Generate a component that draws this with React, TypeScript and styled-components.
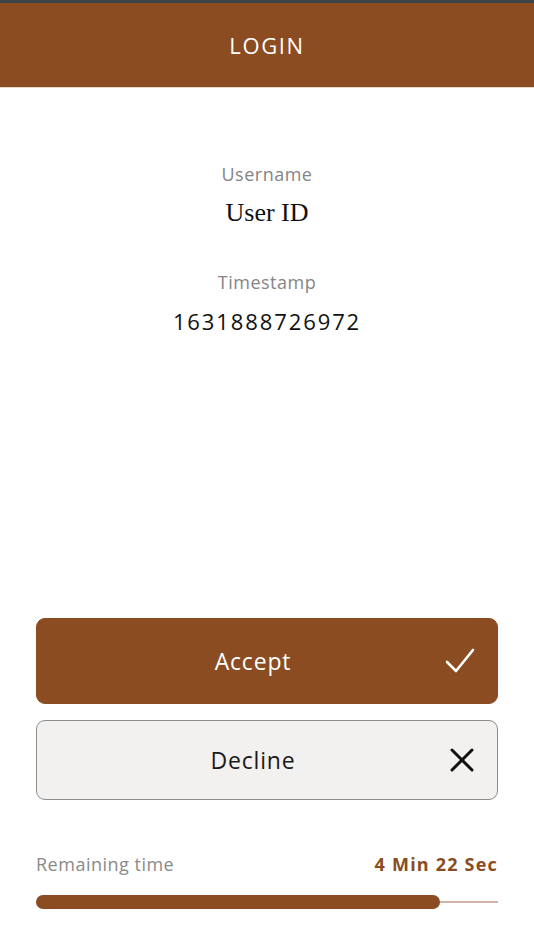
import styled, { createGlobalStyle } from "styled-components";

const Global = createGlobalStyle`
  html, body {
    margin: 0;
    padding: 0;
    background: #fff;
  }
  body {
    font-family: "Open Sans", "Liberation Sans", sans-serif;
  }
`;

const brown = "#8a4c20";

const Page = styled.div`
  width: 534px;
  height: 950px;
  display: flex;
  flex-direction: column;
  border-top: 3px solid #3b4148;
  box-sizing: border-box;
`;

const Header = styled.header`
  height: 84px;
  background: ${brown};
  color: #fff;
  display: flex;
  align-items: center;
  justify-content: center;
  font-size: 22px;
  letter-spacing: 1.6px;
  border-bottom: 1px solid #e8d9cf;
`;

const Info = styled.section`
  display: flex;
  flex-direction: column;
  align-items: center;
  padding-top: 75px;
`;

const Label = styled.div`
  color: #858585;
  font-size: 18px;
  letter-spacing: 0.5px;
  line-height: 22px;
`;

const Value = styled.div<{ $serif?: boolean }>`
  color: #111;
  font-family: ${(p) => (p.$serif ? `"Liberation Serif", serif` : `"Open Sans", sans-serif`)};
  font-size: ${(p) => (p.$serif ? "26px" : "22px")};
  letter-spacing: ${(p) => (p.$serif ? "0" : "1.9px")};
  line-height: 28px;
  margin-top: 14px;
  margin-bottom: 44px;
`;

const Actions = styled.section`
  margin-top: auto;
  padding: 0 36px 41px;
  display: flex;
  flex-direction: column;
`;

const Button = styled.button<{ $primary?: boolean }>`
  position: relative;
  display: flex;
  align-items: center;
  justify-content: center;
  width: 100%;
  height: ${(p) => (p.$primary ? "86px" : "80px")};
  border-radius: 9px;
  border: 1px solid ${(p) => (p.$primary ? brown : "#8d8d8d")};
  background: ${(p) => (p.$primary ? brown : "#f2f1f0")};
  color: ${(p) => (p.$primary ? "#fff" : "#1a1a1a")};
  font-family: "Open Sans", sans-serif;
  font-size: 23px;
  letter-spacing: 0.8px;
  margin-bottom: 16px;
  cursor: pointer;
  padding: 0 28px 0 0;
`;

const Icon = styled.span`
  position: absolute;
  right: 22px;
  top: 50%;
  transform: translateY(-50%);
  display: flex;
`;

const TimeRow = styled.div`
  display: flex;
  justify-content: space-between;
  align-items: baseline;
  margin-top: 36px;
`;

const TimeLabel = styled.span`
  color: #8a8a8a;
  font-size: 18px;
  letter-spacing: 0.5px;
`;

const TimeValue = styled.span`
  color: ${brown};
  font-size: 18px;
  font-weight: 700;
  letter-spacing: 1.2px;
`;

const Track = styled.div`
  margin-top: 19px;
  height: 14px;
  display: flex;
  align-items: center;
  position: relative;
  &::before {
    content: "";
    position: absolute;
    left: 0;
    right: 0;
    top: 6px;
    height: 2px;
    background: #d2b3a8;
  }
`;

const Fill = styled.div`
  position: relative;
  height: 14px;
  border-radius: 7px;
  background: ${brown};
`;

export default function App() {
  const progress = 404 / 462;
  return (
    <>
      <Global />
      <Page>
        <Header>LOGIN</Header>
        <Info>
          <Label>Username</Label>
          <Value $serif>User ID</Value>
          <Label>Timestamp</Label>
          <Value>1631888726972</Value>
        </Info>
        <Actions>
          <Button $primary>
            Accept
            <Icon>
              <svg width="30" height="30" viewBox="0 0 30 30" fill="none">
                <path d="M2 16 L11 25 L28 4" stroke="#fff" strokeWidth="2.6" strokeLinecap="round" strokeLinejoin="round" />
              </svg>
            </Icon>
          </Button>
          <Button>
            Decline
            <Icon>
              <svg width="26" height="26" viewBox="0 0 26 26" fill="none">
                <path d="M3 3 L23 23 M23 3 L3 23" stroke="#111" strokeWidth="3" strokeLinecap="round" />
              </svg>
            </Icon>
          </Button>
          <TimeRow>
            <TimeLabel>Remaining time</TimeLabel>
            <TimeValue>4 Min 22 Sec</TimeValue>
          </TimeRow>
          <Track>
            <Fill style={{ width: `${progress * 100}%` }} />
          </Track>
        </Actions>
      </Page>
    </>
  );
}
